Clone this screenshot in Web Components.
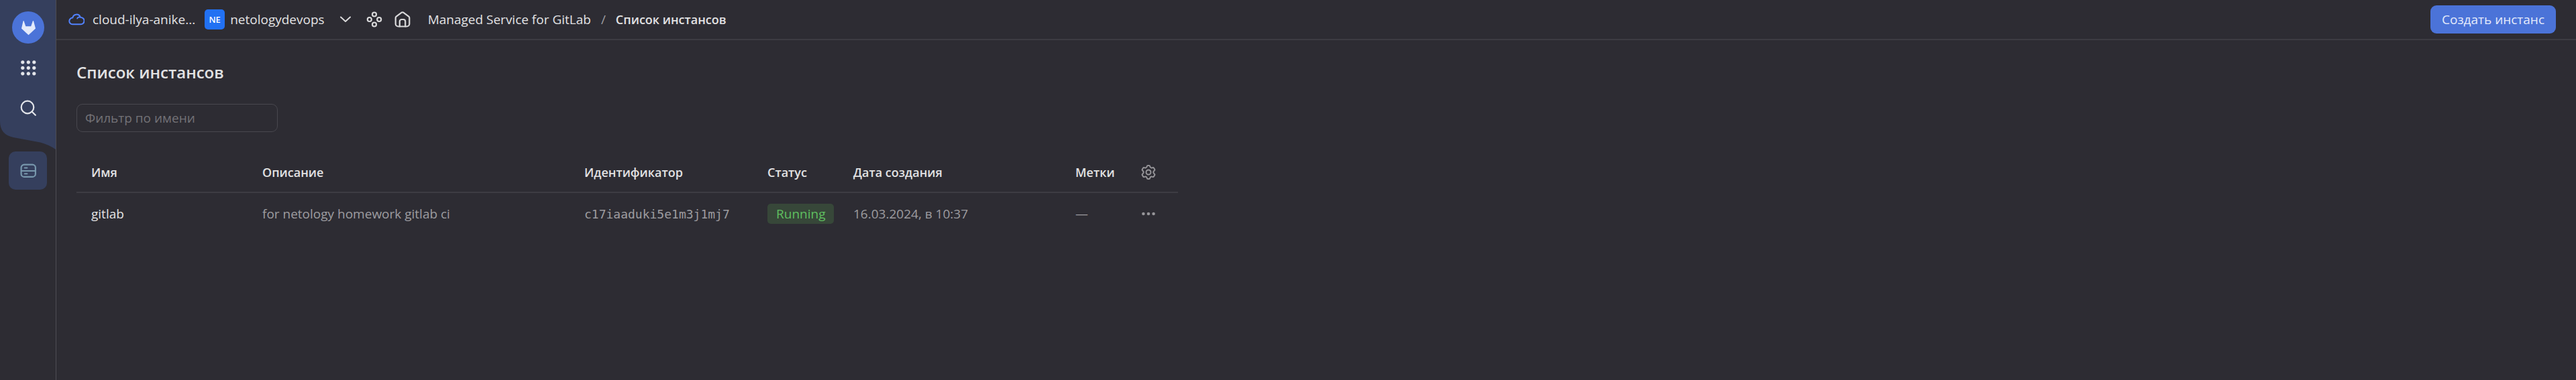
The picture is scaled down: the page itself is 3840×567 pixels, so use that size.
<!DOCTYPE html>
<html lang="ru">
<head>
<meta charset="utf-8">
<title>Список инстансов</title>
<style>
  :root {
    --bg: #2d2c33;
    --line: #3d3c43;
    --text: #e2e2e3;
    --muted: #9d9ca0;
    --brand: #4b73d8;
    --panel: #353f5d;
  }
  body {
    margin: 0;
    background: var(--bg);
    color: var(--text);
    font: 400 19px/28px "Open Sans", "Noto Sans", sans-serif;
  }
</style>
</head>
<body>
<app-shell>
  <side-nav slot="nav"></side-nav>
  <top-bar slot="header">
    <cloud-picker></cloud-picker>
    <bread-crumbs></bread-crumbs>
    <action-button slot="actions">Создать инстанс</action-button>
  </top-bar>
  <instance-page heading="Список инстансов">
    <name-filter placeholder="Фильтр по имени"></name-filter>
    <instance-table></instance-table>
  </instance-page>
</app-shell>

<script>
const define = (name, html) => {
  const template = document.createElement('template');
  template.innerHTML = html;
  customElements.define(name, class extends HTMLElement {
    constructor() {
      super();
      this.attachShadow({ mode: 'open' }).append(template.content.cloneNode(true));
    }
    connectedCallback() {
      const heading = this.shadowRoot.querySelector('[data-heading]');
      if (heading) heading.textContent = this.getAttribute('heading');
      const input = this.shadowRoot.querySelector('input');
      if (input) input.placeholder = this.getAttribute('placeholder');
    }
  });
};

const ICONS = {
  gitlab: [48, 48, '<path d="M17.5 14l2.8 8.2h7.9L31 14l1 .2L35 25.5 24.5 35.200 14 25.500l2.600-11.300z" fill="#e4eafb"/>'],
  apps: [24, 24, '<g fill="#e3e5ea"><circle cx="3.800" cy="3.800" r="2.600"/><circle cx="12.300" cy="3.800" r="2.600"/><circle cx="20.800" cy="3.800" r="2.600"/><circle cx="3.800" cy="12.300" r="2.600"/><circle cx="12.300" cy="12.300" r="2.600"/><circle cx="20.800" cy="12.300" r="2.600"/><circle cx="3.800" cy="20.800" r="2.600"/><circle cx="12.300" cy="20.800" r="2.600"/><circle cx="20.800" cy="20.800" r="2.600"/></g>'],
  search: [24, 24, '<g stroke="#e3e5ea" stroke-width="2.200"><circle cx="11" cy="11" r="9.300"/><path d="M17.500 17.500l5.300 5.300"/></g>'],
  server: [24, 24, '<g stroke="#7898ad" stroke-width="2.200"><rect x="1.600" y="2.600" width="21.300" height="18.300" rx="4.500"/><path d="M2 12h21"/><path d="M6.800 7.500h3.600M6.800 16.300h3.600" stroke-width="2"/></g>'],
  cloud: [24, 20, '<g stroke="#5282ff" stroke-width="2"><path d="M17.600 6A6 6 0 0 0 6.300 7.600A4.800 4.800 0 0 0 6 17.300H18.400A5.200 5.200 0 0 0 18.400 6.900Q14.200 5.800 13.200 8.500"/></g>'],
  chevron: [18, 10, '<path d="M2 1.500l7 6.500 7-6.500" stroke="#d9d9da" stroke-width="2"/>'],
  nodes: [24, 24, '<g stroke="#d9d9da" stroke-width="2.200"><circle cx="12" cy="4.500" r="3"/><circle cx="4.800" cy="12" r="3"/><circle cx="19.200" cy="12" r="3"/><circle cx="12" cy="19.500" r="3"/></g>'],
  home: [24, 24, '<g stroke="#d9d9da" stroke-width="2.200"><path d="M1.700 9.700Q1.700 8.500 2.700 7.700L10.400 1.800Q12 .8 13.600 1.800L21.300 7.700Q22.300 8.500 22.300 9.700V18.500a4 4 0 0 1-4 4H5.700a4 4 0 0 1-4-4z"/><path d="M7.800 22.500V15a3 3 0 0 1 3-3h2.400a3 3 0 0 1 3 3v7.500"/></g>'],
  gear: [22, 24, '<g transform="translate(0 1)" stroke="#969599" stroke-width="2"><circle cx="11" cy="11" r="3.500"/><path d="M8.800 2.200Q9 .9 10.300.9h1.400Q13 .9 13.200 2.200Q13.500 4.300 15.200 4.600Q16.200 4.700 17.200 4.100Q18.400 3.600 19 4.700L20.100 6.600Q20.700 7.600 20 8.300Q18.300 9.600 18.300 11Q18.300 12.400 20 13.700Q20.700 14.400 20.100 15.400L19 17.300Q18.400 18.400 17.200 17.900Q16.200 17.300 15.200 17.400Q13.500 17.700 13.200 19.800Q13 21.100 11.700 21.100h-1.400Q9 21.100 8.800 19.800Q8.500 17.700 6.800 17.400Q5.800 17.300 4.800 17.900Q3.600 18.400 3 17.300L1.900 15.400Q1.300 14.400 2 13.700Q3.700 12.400 3.700 11Q3.700 9.600 2 8.300Q1.300 7.600 1.900 6.600L3 4.700Q3.600 3.600 4.800 4.100Q5.800 4.700 6.800 4.600Q8.500 4.300 8.800 2.200z"/></g>'],
  dots: [22, 6, '<g fill="#969599"><circle cx="3.400" cy="3" r="2.300"/><circle cx="11" cy="3" r="2.300"/><circle cx="18.600" cy="3" r="2.300"/></g>']
};

customElements.define('ui-icon', class extends HTMLElement {
  connectedCallback() {
    if (this.shadowRoot) return;
    const [w, h, body] = ICONS[this.getAttribute('name')];
    this.attachShadow({ mode: 'open' }).innerHTML =
      `<style>:host{display:inline-flex;flex:none}svg{display:block}</style>
       <svg width="${w}" height="${h}" viewBox="0 0 ${w} ${h}" fill="none" stroke-linecap="round" stroke-linejoin="round" aria-hidden="true">${body}</svg>`;
  }
});

define('app-shell', `
  <style>
    :host { display: grid; grid-template-columns: auto 1fr; min-height: 100vh; }
    .main { min-width: 0; }
  </style>
  <slot name="nav"></slot>
  <div class="main"><slot name="header"></slot><slot></slot></div>`);

define('side-nav', `
  <style>
    :host { display: block; width: 83px; border-right: 1px solid #4d4c53; }
    nav { display: flex; flex-direction: column; align-items: center; gap: 3px; }
    .top { position: relative; isolation: isolate; width: 100%; box-sizing: border-box;
      display: flex; flex-direction: column; align-items: center; gap: 12px; padding: 17px 0 38px; }
    .wave { position: absolute; inset: 0; z-index: -1; width: 100%; height: 100%; }
    a, button { display: flex; align-items: center; justify-content: center; width: 48px; height: 48px;
      padding: 0; border: 0; background: none; cursor: pointer; }
    .logo { border-radius: 50%; background: var(--brand); }
    .tile { width: 57px; height: 57px; border-radius: 10px; background: var(--panel); }
  </style>
  <nav aria-label="Сервис">
    <div class="top">
      <svg class="wave" viewBox="0 0 83 223" preserveAspectRatio="none" aria-hidden="true">
        <path d="M0 0H83V223Q73 216 60 212.500L20 205Q0 201 0 181Z" fill="#353f5d"/>
      </svg>
      <a class="logo" href="#" aria-label="Managed Service for GitLab"><ui-icon name="gitlab"></ui-icon></a>
      <button type="button" aria-label="Все сервисы"><ui-icon name="apps"></ui-icon></button>
      <button type="button" aria-label="Поиск"><ui-icon name="search"></ui-icon></button>
    </div>
    <a class="tile" href="#" aria-label="Инстансы" aria-current="page"><ui-icon name="server"></ui-icon></a>
  </nav>`);

define('top-bar', `
  <style>
    :host { display: flex; align-items: center; height: 58px; padding: 0 30px 0 18px; border-bottom: 2px solid var(--line); }
    .spacer { flex: 1; }
  </style>
  <slot></slot><div class="spacer"></div><slot name="actions"></slot>`);

define('cloud-picker', `
  <style>
    :host { display: flex; align-items: center; margin-right: 26px; }
    a, button { display: flex; align-items: center; padding: 0; border: 0; background: none; color: inherit;
      font: inherit; text-decoration: none; white-space: nowrap; cursor: pointer; }
    .cloud { gap: 12px; margin-right: 14px; }
    .folder { gap: 8px; margin-right: 22px; }
    .mark { width: 30px; height: 30px; border-radius: 5px; background: #2271f3; color: #fff;
      font-size: 13px; font-weight: 600; line-height: 30px; text-align: center; }
    .chevron { margin-right: 22px; }
    .icons { display: flex; gap: 18px; }
  </style>
  <a class="cloud" href="#"><ui-icon name="cloud"></ui-icon><span>cloud-ilya-anike...</span></a>
  <a class="folder" href="#"><span class="mark">NE</span><span>netologydevops</span></a>
  <button class="chevron" type="button" aria-label="Выбрать каталог"><ui-icon name="chevron"></ui-icon></button>
  <div class="icons">
    <a href="#" aria-label="Ресурсы"><ui-icon name="nodes"></ui-icon></a>
    <a href="#" aria-label="Главная"><ui-icon name="home"></ui-icon></a>
  </div>`);

define('bread-crumbs', `
  <style>
    ol { display: flex; margin: 0; padding: 0; list-style: none; white-space: nowrap; }
    a { color: inherit; text-decoration: none; }
    .sep { margin: 0 15px; color: var(--muted); }
    .current { font-size: 18px; font-weight: 600; }
  </style>
  <nav aria-label="Навигация"><ol>
    <li><a href="#">Managed Service for GitLab</a></li>
    <li class="sep" aria-hidden="true">/</li>
    <li class="current" aria-current="page">Список инстансов</li>
  </ol></nav>`);

define('action-button', `
  <style>
    :host { display: block; }
    button { height: 42px; padding: 0 17px; border: 0; border-radius: 9px; background: var(--brand);
      color: #e4eafb; font: inherit; white-space: nowrap; cursor: pointer; }
  </style>
  <button type="button"><slot></slot></button>`);

define('instance-page', `
  <style>
    :host { display: block; padding: 32px 30px; }
    h1 { margin: 0 0 31px; font-size: 24px; line-height: 32px; font-weight: 600; }
  </style>
  <h1 data-heading></h1>
  <slot></slot>`);

define('name-filter', `
  <style>
    :host { display: block; max-width: 300px; margin-bottom: 31px; }
    input { display: block; box-sizing: border-box; width: 100%; height: 42px; padding: 0 12px;
      border: 1px solid #48474e; border-radius: 9px; background: transparent; color: inherit; font: inherit; outline: 0; }
    input::placeholder { color: #737277; opacity: 1; }
  </style>
  <input type="text" aria-label="Фильтр по имени">`);

define('status-label', `
  <style>
    :host { display: inline-block; padding: 0 13px; border-radius: 5px; background: #374739; color: #5fbf60; line-height: 30px; }
  </style>
  <slot></slot>`);

define('instance-table', `
  <style>
    :host { display: block; max-width: 1642px; }
    table { width: 100%; table-layout: fixed; border-collapse: collapse; }
    th, td { padding: 0; text-align: left; vertical-align: middle; white-space: nowrap; }
    th { height: 58px; font-weight: 600; font-size: 18px; border-bottom: 2px solid var(--line); }
    td { height: 62px; color: var(--muted); }
    th:first-child, td:first-child { padding-left: 22px; }
    td a { color: var(--text); text-decoration: none; }
    code { font: 18px/28px "DejaVu Sans Mono", monospace; }
    button { display: flex; align-items: center; height: 28px; padding: 0; border: 0; background: none; cursor: pointer; }
    .name { width: 277px; } .about { width: 480px; } .id { width: 273px; } .status { width: 128px; }
    .date { width: 331px; } .labels { width: 98px; } .menu { width: 55px; }
  </style>
  <table>
    <colgroup><col class="name"><col class="about"><col class="id"><col class="status"><col class="date"><col class="labels"><col class="menu"></colgroup>
    <thead><tr>
      <th scope="col">Имя</th><th scope="col">Описание</th><th scope="col">Идентификатор</th><th scope="col">Статус</th>
      <th scope="col">Дата создания</th><th scope="col">Метки</th>
      <th scope="col"><button type="button" aria-label="Настройки таблицы"><ui-icon name="gear"></ui-icon></button></th>
    </tr></thead>
    <tbody><tr>
      <td><a href="#">gitlab</a></td><td>for netology homework gitlab ci</td><td><code>c17iaaduki5e1m3j1mj7</code></td>
      <td><status-label>Running</status-label></td><td>16.03.2024, в 10:37</td><td>—</td>
      <td><button type="button" aria-label="Действия"><ui-icon name="dots"></ui-icon></button></td>
    </tr></tbody>
  </table>`);
</script>
</body>
</html>
